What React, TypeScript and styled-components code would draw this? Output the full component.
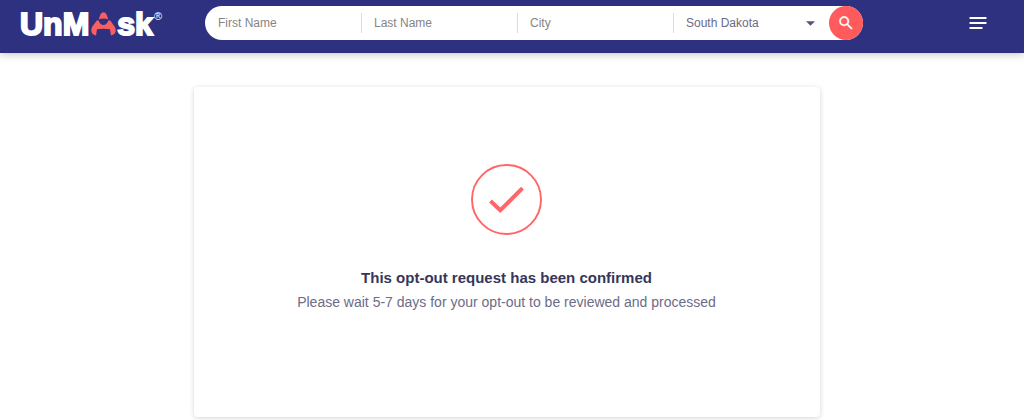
import React from "react";
import styled, { createGlobalStyle } from "styled-components";

const GlobalStyle = createGlobalStyle`
  *, *::before, *::after { box-sizing: border-box; }
  body {
    margin: 0;
    background: #fff;
    font-family: "Liberation Sans", Arial, sans-serif;
  }
`;

const Header = styled.header`
  display: flex;
  align-items: flex-start;
  padding: 6px 37px 13px 20px;
  background: #2e317f;
  box-shadow: 0 1px 8px rgba(0, 0, 0, 0.25);
`;

const LogoLink = styled.a`
  display: flex;
  align-items: flex-start;
  flex: 0 0 185px;
  height: 34px;
  color: #fff;
  font-size: 32px;
  font-weight: 700;
  line-height: 36px;
  text-decoration: none;
  -webkit-text-stroke: 2px #fff;
`;

const LogoMark = styled.svg`
  width: 25px;
  height: 24px;
  margin: 6px 1px 0 2px;
`;

const Registered = styled.sup`
  margin-left: 1px;
  font-size: 11px;
  font-weight: 400;
  line-height: 20px;
  -webkit-text-stroke: 0;
`;

const SearchForm = styled.form`
  display: flex;
  flex: 0 1 658px;
  min-width: 0;
  height: 34px;
  border-radius: 17px;
  background: #fff;
`;

const Field = styled.label`
  position: relative;
  display: flex;
  align-items: center;
  flex: 1 1 0;
  min-width: 0;

  & + &::before {
    content: "";
    width: 1px;
    height: 20px;
    background: #dcdce0;
  }
`;

const TextInput = styled.input`
  flex: 1;
  min-width: 0;
  height: 32px;
  padding: 0 12px;
  border: 0;
  outline: 0;
  background: transparent;
  color: #6a6a86;
  font: 12px/16px "Liberation Sans", Arial, sans-serif;

  &::placeholder { color: #858585; opacity: 1; }
  ${Field}:first-child & { padding-left: 13px; }
`;

const StateSelect = styled.select`
  flex: 1;
  min-width: 0;
  height: 32px;
  padding: 0 28px 0 12px;
  border: 0;
  outline: 0;
  appearance: none;
  background: transparent;
  color: #6a6a86;
  font: 12px/16px "Liberation Sans", Arial, sans-serif;
`;

const Caret = styled.svg`
  position: absolute;
  right: 14px;
  width: 9px;
  height: 5px;
  pointer-events: none;
`;

const SearchButton = styled.button`
  display: grid;
  place-items: center;
  flex: 0 0 34px;
  height: 34px;
  padding: 0;
  border: 0;
  border-radius: 50%;
  background: #ff5a5c;
  cursor: pointer;
`;

const MenuButton = styled.button`
  display: grid;
  place-items: center;
  width: 18px;
  height: 34px;
  margin-left: auto;
  padding: 0;
  border: 0;
  background: none;
  cursor: pointer;
`;

const Main = styled.main`
  display: flex;
  justify-content: center;
  padding: 34px 11px 4px 0;
`;

const Card = styled.section`
  display: flex;
  flex-direction: column;
  align-items: center;
  width: 100%;
  max-width: 626px;
  padding: 77px 16px 102px;
  border-radius: 4px;
  background: #fff;
  box-shadow: 0 1px 5px rgba(40, 40, 70, 0.2);
  text-align: center;
`;

const Title = styled.h1`
  margin: 30px 0 0;
  color: #36365a;
  font-size: 15px;
  font-weight: 700;
  line-height: 25px;
`;

const Message = styled.p`
  margin: 0;
  color: #6c6c88;
  font-size: 14px;
  line-height: 25px;
`;

export default function App() {
  return (
    <>
      <GlobalStyle />
      <Header>
        <LogoLink href="#" aria-label="UnMask home">
          UnM
          <LogoMark viewBox="0 0 25 24" aria-hidden="true">
            <path
              fill="#f75f62"
              d="M12.500 0.300C14.200 0.300 15 1.300 15.500 2.600L17.300 7.200C14.500 6.300 10.500 6.300 7.700 7.200L9.500 2.600C10 1.300 10.800 0.300 12.500 0.300Z"
            />
            <path
              fill="#f75f62"
              d="M5.500 8.800L7.500 8.300C8.500 11.400 10.300 13 12.500 13S16.500 11.400 17.500 8.300L19.500 8.800C21 11.800 24.700 14.500 24.700 18.300C24.700 21 23 23 20 23.500L19 17.300C15 16.600 10 16.600 6 17.300L5 23.500C2 23 0.300 21 0.300 18.300C0.300 14.500 4 11.800 5.500 8.800Z"
            />
          </LogoMark>
          sk
          <Registered>®</Registered>
        </LogoLink>

        <SearchForm role="search" onSubmit={(e) => e.preventDefault()}>
          <Field>
            <TextInput placeholder="First Name" aria-label="First Name" />
          </Field>
          <Field>
            <TextInput placeholder="Last Name" aria-label="Last Name" />
          </Field>
          <Field>
            <TextInput placeholder="City" aria-label="City" />
          </Field>
          <Field>
            <StateSelect aria-label="State" defaultValue="SD">
              <option value="SD">South Dakota</option>
            </StateSelect>
            <Caret viewBox="0 0 8 4" aria-hidden="true">
              <path d="M0 0H8L4 4Z" fill="#55557a" />
            </Caret>
          </Field>
          <SearchButton type="submit" aria-label="Search">
            <svg width="18" height="18" viewBox="0 0 24 24" fill="#fff" stroke="#fff" strokeWidth="0.500" aria-hidden="true">
              <path d="M15.500 14h-.79l-.28-.27A6.471 6.471 0 0 0 16 9.500 6.500 6.500 0 1 0 9.500 16c1.610 0 3.090-.59 4.230-1.570l.27.28v.79l5 4.990L20.490 19l-4.990-5zm-6 0C7.010 14 5 11.990 5 9.500S7.010 5 9.500 5 14 7.010 14 9.500 11.990 14 9.500 14z" />
            </svg>
          </SearchButton>
        </SearchForm>

        <MenuButton type="button" aria-label="Menu">
          <svg width="18" height="12" viewBox="0 0 18 12" fill="#fff" aria-hidden="true">
            <rect x="0.500" y="0" width="17" height="2" rx="0.500" />
            <rect x="0.500" y="5" width="17" height="2" rx="0.500" />
            <rect x="0.500" y="10" width="13" height="2" rx="0.500" />
          </svg>
        </MenuButton>
      </Header>

      <Main>
        <Card>
          <svg width="71" height="71" viewBox="0 0 71 71" fill="none" stroke="#ff6467" aria-hidden="true">
            <circle cx="35.500" cy="35.500" r="34.500" strokeWidth="1.900" />
            <path d="M19.500 37L29.200 46.300L51.500 24.200" strokeWidth="4" />
          </svg>
          <Title>This opt-out request has been confirmed</Title>
          <Message>Please wait 5-7 days for your opt-out to be reviewed and processed</Message>
        </Card>
      </Main>
    </>
  );
}
